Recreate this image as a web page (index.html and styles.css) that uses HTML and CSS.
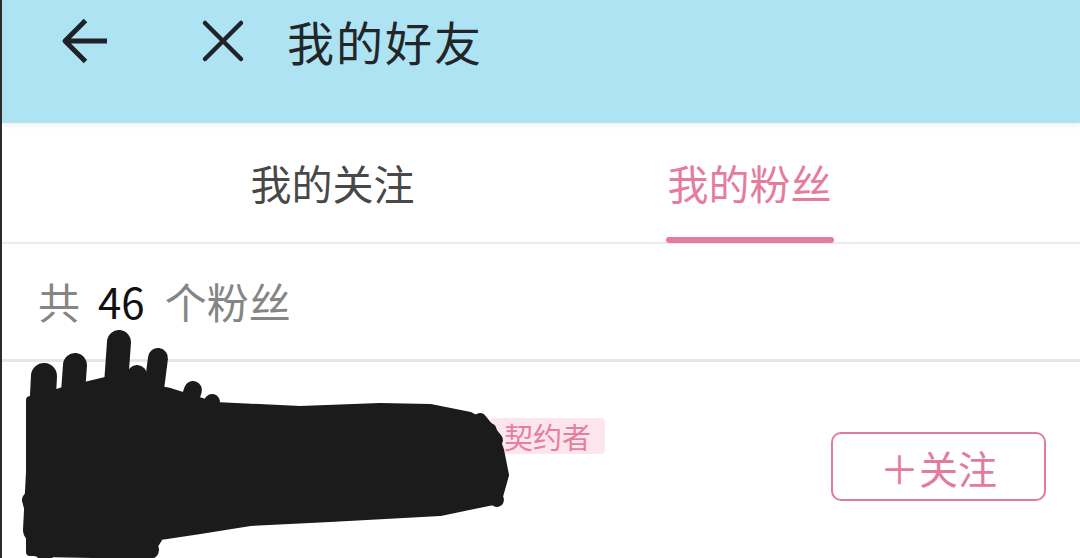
FILE: index.html
```html
<!DOCTYPE html>
<html lang="zh-CN">
<head>
<meta charset="utf-8">
<title>我的好友</title>
<link rel="stylesheet" href="styles.css">
</head>
<body>
<div class="page">
  <header class="appbar">
    <div class="toolbar">
      <button class="icon-btn back" aria-label="返回">
        <svg width="48" height="48" viewBox="0 0 48 48"><path d="M47 24 H5 M25.5 3.5 L5 24 L25.5 44.5" fill="none" stroke="#1f2326" stroke-width="5" stroke-linejoin="round"/></svg>
      </button>
      <button class="icon-btn close" aria-label="关闭">
        <svg width="45" height="44" viewBox="0 0 45 44"><path d="M5 4 L41 40 M41 4 L5 40" fill="none" stroke="#1f2326" stroke-width="4.5" stroke-linecap="round"/></svg>
      </button>
      <h1 class="title">我的好友</h1>
    </div>
  </header>

  <nav class="tabs">
    <div class="tab">我的关注</div>
    <div class="tab active">我的粉丝</div>
  </nav>

  <div class="count">共<span class="num">46</span>个粉丝</div>

  <div class="item">
    <div class="user">
      <div class="avatar"></div>
      <div class="name-line">
        <span class="name"></span>
        <span class="badge">契约者</span>
      </div>
    </div>
    <button class="follow">＋关注</button>
    <svg class="redact" width="520" height="228" viewBox="0 330 520 228" aria-hidden="true">
      <g fill="#1b1b1b" stroke="#1b1b1b" stroke-linecap="round" stroke-linejoin="round">
        <path d="M30 400 L60 392 L110 380 L170 392 L215 406 L300 410 L380 407 L430 408 L470 416 L492 428 L500 450 L505 475 L498 500 L440 512 L330 518 L250 522 L200 530 L160 536 L150 552 L30 552 Z" stroke-width="8"/>
        <path d="M44 376 L36 530" fill="none" stroke-width="26"/>
        <path d="M75 365 L62 545" fill="none" stroke-width="24"/>
        <path d="M119 342 L105 540" fill="none" stroke-width="24"/>
        <path d="M137 375 L130 540" fill="none" stroke-width="20"/>
        <path d="M158 358 L150 420" fill="none" stroke-width="20"/>
        <path d="M193 390 L180 430" fill="none" stroke-width="18"/>
        <path d="M212 402 L200 440" fill="none" stroke-width="16"/>
        <path d="M38 548 L150 550" fill="none" stroke-width="18"/>
        <path d="M30 500 L45 555" fill="none" stroke-width="16"/>
        <path d="M480 420 L496 440 M488 445 L500 470 M490 480 L497 500" fill="none" stroke-width="14"/>
        <path d="M420 410 L440 415 M380 409 L410 410" fill="none" stroke-width="10"/>
      </g>
    </svg>
  </div>
</div>
</body>
</html>
```

FILE: styles.css
```css
* { box-sizing: border-box; }

html, body {
  margin: 0;
  padding: 0;
  background: #ffffff;
}

body {
  font-family: "Noto Sans CJK SC", "Noto Sans", sans-serif;
  overflow: hidden;
}

.page {
  width: 1080px;
  height: 558px;
  border-left: 2px solid #2b2b2b;
  position: relative;
  overflow: hidden;
}

.appbar {
  height: 123px;
  background: #aee3f3;
  box-shadow: 0 2px 6px rgba(0, 0, 0, 0.07);
  position: relative;
  z-index: 1;
}

.toolbar {
  height: 84px;
  display: flex;
  align-items: center;
  padding-left: 58px;
}

.icon-btn {
  border: 0;
  background: none;
  padding: 0;
  margin: 0;
  display: flex;
}

.back { margin-top: -2px; }

.close {
  margin-left: 92px;
  margin-top: -2px;
}

.title {
  margin: -4px 0 0 42px;
  font-size: 47px;
  font-weight: 400;
  color: #232628;
  line-height: 1;
  letter-spacing: 2px;
}

.tabs {
  display: flex;
  height: 121px;
  padding: 0 122px;
  border-bottom: 2px solid #ececec;
}

.tab {
  flex: 1;
  display: flex;
  align-items: center;
  justify-content: center;
  font-size: 41px;
  color: #484848;
  position: relative;
  padding-bottom: 2px;
}

.tab.active {
  color: #e57c9e;
}

.tab.active::after {
  content: "";
  position: absolute;
  left: 50%;
  bottom: -1px;
  width: 168px;
  height: 6px;
  margin-left: -84px;
  border-radius: 3px;
  background: #e97a9e;
}

.count {
  height: 118px;
  display: flex;
  align-items: center;
  padding-left: 36px;
  padding-bottom: 2px;
  font-size: 42px;
  color: #858585;
  border-bottom: 3px solid #e6e6e6;
}

.num {
  color: #111111;
  margin: 0 20px 0 18px;
}

.item {
  position: relative;
  display: flex;
  justify-content: space-between;
  align-items: flex-start;
  padding-right: 34px;
}

.user {
  display: flex;
  align-items: flex-start;
}

.avatar {
  width: 130px;
  height: 130px;
  margin: 20px 0 0 30px;
}

.name-line {
  display: flex;
  align-items: center;
  margin-top: 56px;
}

.name {
  width: 328px;
  height: 36px;
}

.badge {
  display: inline-block;
  height: 36px;
  line-height: 36px;
  padding: 0 14px;
  font-size: 29px;
  color: #e57f9f;
  background: #fde5ed;
  border-radius: 4px;
}

.follow {
  margin-top: 70px;
  width: 215px;
  height: 69px;
  border: 2px solid #e07d9d;
  border-radius: 10px;
  background: #ffffff;
  color: #e27c9d;
  font-family: "Noto Sans CJK SC", sans-serif;
  font-size: 39px;
  padding: 0;
  display: flex;
  align-items: center;
  justify-content: center;
}

.redact {
  position: absolute;
  left: -2px;
  top: -32px;
}
```
